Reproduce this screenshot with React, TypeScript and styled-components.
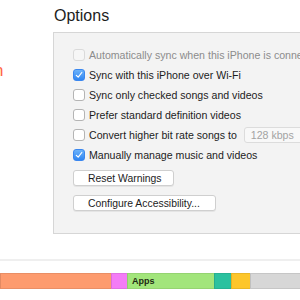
import React, { FC } from "react"
import styled, { createGlobalStyle } from "styled-components"

const GlobalStyle = createGlobalStyle`
  html, body {
    margin: 0;
    padding: 0;
    background: #ffffff;
  }
  body {
    font-family: "Liberation Sans", Arial, sans-serif;
    -webkit-font-smoothing: antialiased;
  }
`

const StyledPage = styled.div`
  width: 300px;
  height: 300px;
  overflow: hidden;
  display: flex;
  flex-direction: column;
  background: #ffffff;
`

const StyledTop = styled.div`
  display: flex;
  height: 236px;
`

const StyledSide = styled.div`
  width: 53px;
  flex: none;
  overflow: hidden;
  padding-top: 60px;
`

const StyledSideLabel = styled.div`
  margin-left: -6px;
  font-size: 17px;
  line-height: 22px;
  color: #ff6445;
`

const StyledMain = styled.div`
  flex: 1;
  min-width: 0;
  display: flex;
  flex-direction: column;
`

const StyledTitle = styled.h1`
  margin: 6px 0 6px 1px;
  font-size: 16px;
  line-height: 20px;
  font-weight: normal;
  color: #1d1d1d;
`

const StyledPanel = styled.div`
  width: 280px;
  height: 202px;
  box-sizing: border-box;
  border: 1px solid #d6d6d6;
  background: #f3f3f3;
  padding: 12px 0 0 19px;
  display: flex;
  flex-direction: column;
`

const StyledRow = styled.label<{ $disabled?: boolean }>`
  display: flex;
  align-items: center;
  height: 20px;
  gap: 4px;
  font-size: 10.6px;
  white-space: nowrap;
  color: ${(p) => (p.$disabled ? "#8c8c8c" : "#1c1c1c")};
`

const StyledBox = styled.span<{ $checked?: boolean; $disabled?: boolean }>`
  width: 12px;
  height: 12px;
  box-sizing: border-box;
  flex: none;
  border-radius: 3px;
  display: grid;
  place-items: center;
  border: 1px solid
    ${(p) => (p.$checked ? "#3a87ef" : p.$disabled ? "#dadada" : "#b4b4b4")};
  background: ${(p) =>
    p.$checked
      ? "linear-gradient(#6cb3fa, #2f86f2)"
      : p.$disabled
        ? "#f6f6f6"
        : "#ffffff"};
`

const StyledSelect = styled.div`
  margin-left: 3px;
  width: 70px;
  height: 16px;
  box-sizing: border-box;
  border: 1px solid #dcdcdc;
  border-radius: 3px;
  background: #f8f8f8;
  color: #a3a3a3;
  padding-left: 6px;
  display: flex;
  align-items: center;
`

const StyledButtons = styled.div`
  display: flex;
  flex-direction: column;
  align-items: flex-start;
  gap: 9px;
  margin-top: 5px;
`

const StyledButton = styled.button`
  height: 16px;
  box-sizing: border-box;
  padding: 0 0 0 14px;
  border: 1px solid #cfcfcf;
  border-radius: 3px;
  background: #ffffff;
  box-shadow: 0 1px 0 rgba(0, 0, 0, 0.06);
  font-family: "Liberation Sans", Arial, sans-serif;
  font-size: 10.4px;
  color: #1c1c1c;
  text-align: left;
  display: flex;
  align-items: center;
`

const StyledDivider = styled.div`
  margin-top: 23px;
  height: 2px;
  background: #efefef;
`

const StyledBar = styled.div`
  margin-top: 12px;
  height: 16px;
  display: flex;
`

const StyledSegment = styled.div<{ $color: string; $width: number }>`
  width: ${(p) => p.$width}px;
  flex: none;
  box-sizing: border-box;
  background: ${(p) => p.$color};
  border-top: 1px solid rgba(0, 0, 0, 0.08);
  border-bottom: 1px solid rgba(0, 0, 0, 0.08);
  border-left: 1px solid rgba(0, 0, 0, 0.1);
  font-size: 9px;
  font-weight: bold;
  color: #1f2a14;
  padding-left: 4px;
  display: flex;
  align-items: center;
`

const Check: FC = () => (
  <svg width="8" height="8" viewBox="0 0 8 8">
    <path
      d="M1.3 4.3 L3.2 6.2 L6.8 1.5"
      fill="none"
      stroke="#ffffff"
      strokeWidth="1.2"
      strokeLinecap="round"
      strokeLinejoin="round"
    />
  </svg>
)

type Option = { label: string; checked?: boolean; disabled?: boolean; select?: string }

const options: Option[] = [
  { label: "Automatically sync when this iPhone is connected", disabled: true },
  { label: "Sync with this iPhone over Wi-Fi", checked: true },
  { label: "Sync only checked songs and videos" },
  { label: "Prefer standard definition videos" },
  { label: "Convert higher bit rate songs to", select: "128 kbps" },
  { label: "Manually manage music and videos", checked: true },
]

const segments = [
  { color: "#fd9b6e", width: 111, label: "" },
  { color: "#f47cf6", width: 16, label: "" },
  { color: "#a2e57b", width: 87, label: "Apps" },
  { color: "#2bc19f", width: 17, label: "" },
  { color: "#fdc62b", width: 19, label: "" },
  { color: "#d7d7d7", width: 60, label: "" },
]

const App: FC = () => (
  <StyledPage>
    <GlobalStyle />
    <StyledTop>
      <StyledSide>
        <StyledSideLabel>n</StyledSideLabel>
      </StyledSide>
      <StyledMain>
        <StyledTitle>Options</StyledTitle>
        <StyledPanel>
          {options.map((o) => (
            <StyledRow key={o.label} $disabled={o.disabled}>
              <StyledBox $checked={o.checked} $disabled={o.disabled}>
                {o.checked && <Check />}
              </StyledBox>
              {o.label}
              {o.select && <StyledSelect>{o.select}</StyledSelect>}
            </StyledRow>
          ))}
          <StyledButtons>
            <StyledButton style={{ width: 101 }}>Reset Warnings</StyledButton>
            <StyledButton style={{ width: 143 }}>Configure Accessibility...</StyledButton>
          </StyledButtons>
        </StyledPanel>
      </StyledMain>
    </StyledTop>
    <StyledDivider />
    <StyledBar>
      {segments.map((s, i) => (
        <StyledSegment key={i} $color={s.color} $width={s.width}>
          {s.label}
        </StyledSegment>
      ))}
    </StyledBar>
  </StyledPage>
)

export default App
